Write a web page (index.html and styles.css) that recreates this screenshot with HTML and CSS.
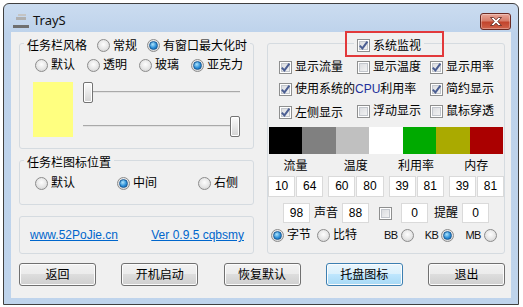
FILE: index.html
```html
<!DOCTYPE html>
<html lang="zh-CN">
<head>
  <meta charset="UTF-8">
  <title>TrayS</title>
  <link rel="stylesheet" href="styles.css">
</head>
<body>
  <div class="window">
    <div class="titlebar">
      <svg class="app-icon" width="16" height="15" viewBox="0 0 16 15">
        <rect x="5" y="0" width="8" height="2" fill="#c4c4c4"/>
        <rect x="3" y="3" width="10" height="3" fill="#b0b0b0"/>
        <rect x="0" y="11" width="16" height="3" fill="#6f6f6f"/>
      </svg>
      <span class="title">TrayS</span>
      <span class="close">
        <svg width="12" height="9" viewBox="0 0 12 9">
          <path d="M0.5 0.5H3.6L6 2.8L8.4 0.5H11.5L7.8 4.5L11.5 8.5H8.4L6 6.2L3.6 8.5H0.5L4.2 4.5Z" fill="#fff" stroke="#5a211b" stroke-width="0.8"/>
        </svg>
      </span>
    </div>

    <div class="client">
      <div class="panes">
        <div class="left">
          <fieldset class="group style-box">
            <legend><span class="legend-row">任务栏风格
              <label class="opt"><span class="radio"></span>常规</label>
              <label class="opt"><span class="radio on"></span>有窗口最大化时</label>
            </span></legend>
            <div class="row styles">
              <label class="opt"><span class="radio"></span>默认</label>
              <label class="opt"><span class="radio"></span>透明</label>
              <label class="opt"><span class="radio"></span>玻璃</label>
              <label class="opt"><span class="radio on"></span>亚克力</label>
            </div>
            <div class="alpha">
              <div class="tint"></div>
              <div class="sliders">
                <div class="slider"><span class="thumb"></span></div>
                <div class="slider end"><span class="thumb"></span></div>
              </div>
            </div>
          </fieldset>

          <fieldset class="group pos-box">
            <legend><span class="legend-row">任务栏图标位置</span></legend>
            <div class="row pos">
              <label class="opt"><span class="radio"></span>默认</label>
              <label class="opt"><span class="radio on"></span>中间</label>
              <label class="opt"><span class="radio"></span>右侧</label>
            </div>
          </fieldset>

          <div class="group links-box">
            <a href="#">www.52PoJie.cn</a>
            <a href="#">Ver 0.9.5 cqbsmy</a>
          </div>
        </div>

        <fieldset class="group monitor">
          <legend><span class="legend-row">
            <label class="opt"><span class="check"><svg width="11" height="11" viewBox="0 0 11 11"><path d="M1.8 5.6L4.4 8.4L9.4 1.6" fill="none" stroke="#4b5e92" stroke-width="2"/></svg></span>系统监视</label>
          </span></legend>

          <div class="checks">
            <label class="opt"><span class="check"><svg width="11" height="11" viewBox="0 0 11 11"><path d="M1.8 5.6L4.4 8.4L9.4 1.6" fill="none" stroke="#4b5e92" stroke-width="2"/></svg></span>显示流量</label>
            <label class="opt"><span class="check"></span>显示温度</label>
            <label class="opt"><span class="check"><svg width="11" height="11" viewBox="0 0 11 11"><path d="M1.8 5.6L4.4 8.4L9.4 1.6" fill="none" stroke="#4b5e92" stroke-width="2"/></svg></span>显示用率</label>
            <label class="opt wide"><span class="check"><svg width="11" height="11" viewBox="0 0 11 11"><path d="M1.8 5.6L4.4 8.4L9.4 1.6" fill="none" stroke="#4b5e92" stroke-width="2"/></svg></span><span>使用系统的<span class="cpu">CPU</span>利用率</span></label>
            <label class="opt"><span class="check"><svg width="11" height="11" viewBox="0 0 11 11"><path d="M1.8 5.6L4.4 8.4L9.4 1.6" fill="none" stroke="#4b5e92" stroke-width="2"/></svg></span>简约显示</label>
            <label class="opt low"><span class="check"><svg width="11" height="11" viewBox="0 0 11 11"><path d="M1.8 5.6L4.4 8.4L9.4 1.6" fill="none" stroke="#4b5e92" stroke-width="2"/></svg></span>左侧显示</label>
            <label class="opt"><span class="check"></span>浮动显示</label>
            <label class="opt"><span class="check"></span>鼠标穿透</label>
          </div>

          <div class="swatches">
            <span class="sw" style="background:#000000"></span>
            <span class="sw" style="background:#808080"></span>
            <span class="sw" style="background:#c0c0c0"></span>
            <span class="sw" style="background:#ffffff"></span>
            <span class="sw" style="background:#00aa00"></span>
            <span class="sw" style="background:#aaaa00"></span>
            <span class="sw" style="background:#aa0000"></span>
          </div>

          <div class="heads">
            <span>流量</span><span>温度</span><span>利用率</span><span>内存</span>
          </div>
          <div class="nums">
            <div class="pair"><span class="box">10</span><span class="box">64</span></div>
            <div class="pair"><span class="box">60</span><span class="box">80</span></div>
            <div class="pair"><span class="box">39</span><span class="box">81</span></div>
            <div class="pair"><span class="box">39</span><span class="box">81</span></div>
          </div>

          <div class="misc">
            <span class="box">98</span>
            <span>声音</span>
            <span class="box">88</span>
            <span class="check mid"></span>
            <span class="box">0</span>
            <span class="remind">提醒</span>
            <span class="box">0</span>
          </div>

          <div class="units">
            <label class="opt"><span class="radio on"></span>字节</label>
            <label class="opt bit"><span class="radio"></span>比特</label>
            <label class="opt unit bb">BB<span class="radio"></span></label>
            <label class="opt unit">KB<span class="radio on"></span></label>
            <label class="opt unit">MB<span class="radio"></span></label>
          </div>
        </fieldset>
      </div>

      <div class="buttons">
        <button class="btn">返回</button>
        <button class="btn">开机启动</button>
        <button class="btn">恢复默认</button>
        <button class="btn hot">托盘图标</button>
        <button class="btn">退出</button>
      </div>
    </div>
  </div>

  <div class="mark"></div>
</body>
</html>
```

FILE: styles.css
```css
* {
  box-sizing: border-box;
}
body {
  margin: 0;
  width: 523px;
  height: 307px;
  overflow: hidden;
  background: #fff;
  font-family: "Liberation Sans", "Noto Sans CJK SC", sans-serif;
  font-size: 12px;
  line-height: 16px;
  color: #000;
}

/* window frame */
.window {
  width: 516px;
  height: 302px;
  margin: 3px 0 0 3px;
  padding: 0 7px 5px 7px;
  border: 1px solid #404040;
  border-radius: 6px 6px 0 0;
  background: linear-gradient(#cbdcf0, #bdd2eb 30px, #bfd4ec);
}
.titlebar {
  display: flex;
  align-items: flex-start;
  height: 28px;
  padding-top: 9px;
}
.app-icon {
  margin: 1px 4px 0 2px;
}
.title {
  font-family: "Noto Sans", "Liberation Sans", sans-serif;
  font-size: 13px;
  line-height: 15px;
  color: #111;
}
.close {
  margin-left: auto;
  width: 31px;
  height: 17px;
  display: flex;
  align-items: center;
  justify-content: center;
  border: 1px solid #6b2a23;
  border-radius: 3px;
  background: linear-gradient(#e9a698, #d77d6a 45%, #c2442c 55%, #d0634b);
  box-shadow: inset 0 0 0 1px rgba(255, 255, 255, 0.3);
}

.client {
  height: 266px;
  padding: 1px 5px 0 8px;
  background: #f0f0f0;
}
.panes {
  display: flex;
  gap: 13px;
}
.left {
  width: 235px;
  display: flex;
  flex-direction: column;
}

/* group boxes */
.group {
  margin: 0;
  padding: 0;
  min-width: 0;
  border: 1px solid #d5dbe0;
  border-radius: 3px;
}
.group legend {
  padding: 4px 3px 0;
  margin-left: 4px;
}
.legend-row {
  display: flex;
  align-items: center;
  gap: 10px;
  height: 17px;
  white-space: nowrap;
}

.opt {
  display: inline-flex;
  align-items: center;
  gap: 3px;
  white-space: nowrap;
}
.radio {
  flex: none;
  width: 13px;
  height: 13px;
  display: inline-flex;
  align-items: center;
  justify-content: center;
  border: 1px solid #8c8c8c;
  border-radius: 50%;
  background: radial-gradient(circle at 50% 40%, #fdfdfd, #e8e8e8 50%, #cdcdcd);
}
.radio.on::after {
  content: "";
  width: 7px;
  height: 7px;
  border: 1px solid #1a5b96;
  border-radius: 50%;
  background: radial-gradient(circle at 40% 35%, #aee3fb, #2b8fd8 55%, #0e5aa7);
}
.check {
  flex: none;
  width: 13px;
  height: 13px;
  display: inline-flex;
  align-items: center;
  justify-content: center;
  border: 1px solid #8e8f8f;
  background: linear-gradient(135deg, #d6d8dc, #f7f7f7);
  box-shadow: inset 0 0 0 1px #fff, inset 0 0 0 2px #c2c6cc;
}

.style-box {
  padding-bottom: 11px;
}
.row {
  height: 16px;
  display: flex;
  align-items: center;
}
.styles {
  margin-top: 3px;
  padding-left: 15px;
  gap: 12px;
}
.alpha {
  display: flex;
  margin-top: 9px;
  padding-left: 13px;
}
.tint {
  width: 40px;
  height: 55px;
  background: #ffff80;
}
.sliders {
  width: 159px;
  height: 55px;
  margin-left: 9px;
  display: flex;
  flex-direction: column;
  justify-content: space-between;
}
.slider {
  height: 21px;
  display: flex;
  padding: 0 1px;
  background: linear-gradient(transparent 9px, #a9a9a9 9px, #a9a9a9 10px, #e2e2e2 10px, #e2e2e2 11px, transparent 11px) 1px 0 / 157px 21px no-repeat;
}
.slider.end {
  justify-content: flex-end;
}
.thumb {
  width: 10px;
  height: 21px;
  border: 1px solid #737373;
  border-radius: 2px;
  background: linear-gradient(#fbfbfb, #e6e6e6 55%, #d3d3d3);
  box-shadow: inset 0 0 0 1px #fff;
}

.pos-box {
  margin-top: 1px;
  padding-bottom: 13px;
}
.pos {
  display: grid;
  grid-template-columns: 82px 81px auto;
  margin-top: 4px;
  padding-left: 15px;
}

.links-box {
  height: 38px;
  margin-top: 11px;
  padding: 0 9px 0 10px;
  display: flex;
  align-items: center;
  justify-content: space-between;
}
.links-box a {
  color: #0066cc;
  text-decoration: underline;
}

/* monitor panel */
.monitor {
  width: 238px;
  padding-bottom: 10px;
}
.monitor legend {
  margin-left: 86px;
}
.checks {
  display: grid;
  grid-template-columns: 78px 73px auto;
  grid-auto-rows: 16px;
  row-gap: 6px;
  margin-top: 5px;
  padding-left: 11px;
}
.checks .wide {
  grid-column: span 2;
}
.checks .low {
  margin-top: 3px;
}
.cpu {
  color: #22309a;
}
.swatches {
  display: flex;
  height: 27px;
  margin: 8px 1px 0;
}
.sw {
  flex: 1;
}
.heads,
.nums {
  display: grid;
  grid-template-columns: repeat(4, 1fr);
  column-gap: 5px;
}
.heads {
  margin-top: 4px;
  text-align: center;
}
.nums {
  margin-top: 2px;
}
.pair {
  display: flex;
  gap: 1px;
}
.box {
  flex: 1;
  height: 21px;
  line-height: 19px;
  text-align: center;
  background: #fff;
  border: 1px solid #dadada;
}
.misc {
  display: flex;
  align-items: center;
  gap: 4px;
  height: 20px;
  margin-top: 6px;
  padding-left: 15px;
}
.misc .box {
  flex: none;
  width: 27px;
  height: 20px;
  line-height: 18px;
}
.misc .mid {
  margin: 0 5px 0 6px;
}
.misc .remind {
  margin-left: 2px;
}
.units {
  display: flex;
  align-items: center;
  height: 16px;
  margin-top: 4px;
  padding-left: 3px;
}
.units .bit {
  margin-left: 6px;
}
.unit {
  font-size: 11px;
  letter-spacing: -0.5px;
  margin-left: 11px;
  color: #111;
}
.unit.bb {
  margin-left: 27px;
}

/* dialog buttons */
.buttons {
  display: flex;
  justify-content: space-between;
  margin-top: 9px;
  padding-right: 1px;
}
.btn {
  width: 77px;
  height: 23px;
  padding: 0;
  display: flex;
  align-items: center;
  justify-content: center;
  font: inherit;
  color: #000;
  border: 1px solid #707070;
  border-radius: 3px;
  background: linear-gradient(#f2f2f2, #ebebeb 50%, #dddddd 50%, #cfcfcf);
  box-shadow: inset 0 0 0 1px #fcfcfc;
}
.btn.hot {
  border-color: #3c7fb1;
  background: linear-gradient(#eaf6fd, #d9f0fc 50%, #bee6fd 50%, #a7d9f5);
}

/* red highlight drawn over the screenshot */
.mark {
  position: absolute;
  left: 345px;
  top: 31px;
  width: 99px;
  height: 26px;
  border: 2px solid #e2393b;
}
```
